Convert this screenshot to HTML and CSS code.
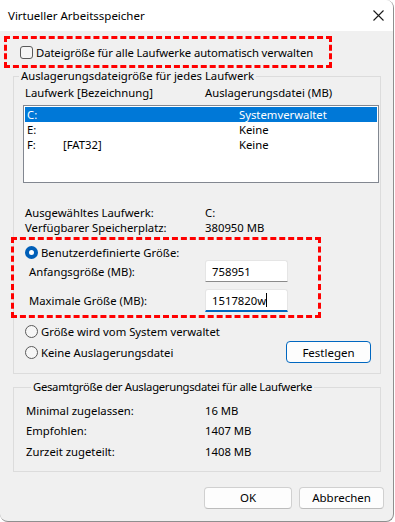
FILE: index.html
```html
<html lang="de">
<head>
    <meta charset="UTF-8">
    <meta name="viewport" content="width=device-width, initial-scale=1.0">
    <title>Virtueller Arbeitsspeicher</title>
    <link rel="stylesheet" href="styles.css">
</head>
<body>
    <div class="window">
        <div class="titlebar">
            <span class="title">Virtueller Arbeitsspeicher</span>
            <svg class="close" width="11" height="11" viewBox="0 0 11 11">
                <path d="M0.5 0.5 L10.5 10.5 M10.5 0.5 L0.5 10.5" stroke="#1a1a1a" stroke-width="1.1" fill="none"/>
            </svg>
        </div>

        <div class="content">
            <div class="mark mark-auto">
                <label class="check-row">
                    <span class="checkbox"></span>
                    Dateigröße für alle Laufwerke automatisch verwalten
                </label>
            </div>

            <fieldset class="group group-drive">
                <legend>Auslagerungsdateigröße für jedes Laufwerk</legend>
                <div class="cols">
                    <span class="col-a">Laufwerk [Bezeichnung]</span>
                    <span>Auslagerungsdatei (MB)</span>
                </div>
                <div class="listbox">
                    <div class="list-row selected"><span>C:</span><span></span><span>Systemverwaltet</span></div>
                    <div class="list-row"><span>E:</span><span></span><span>Keine</span></div>
                    <div class="list-row"><span>F:</span><span>[FAT32]</span><span>Keine</span></div>
                </div>

                <div class="info">
                    <div class="info-row"><span class="info-label">Ausgewähltes Laufwerk:</span><span>C:</span></div>
                    <div class="info-row"><span class="info-label">Verfügbarer Speicherplatz:</span><span>380950 MB</span></div>
                </div>

                <div class="mark mark-custom">
                    <div class="radio-row">
                        <span class="radio checked"></span>
                        Benutzerdefinierte Größe:
                    </div>
                    <div class="field-row">
                        <span class="field-label">Anfangsgröße (MB):</span>
                        <span class="input">758951</span>
                    </div>
                    <div class="field-row second">
                        <span class="field-label">Maximale Größe (MB):</span>
                        <span class="input focused">1517820w<span class="caret"></span></span>
                    </div>
                </div>

                <div class="radio-row option">
                    <span class="radio"></span>
                    Größe wird vom System verwaltet
                </div>
                <div class="radio-row option last">
                    <span class="radio"></span>
                    Keine Auslagerungsdatei
                    <button class="btn btn-default">Festlegen</button>
                </div>
            </fieldset>

            <fieldset class="group group-total">
                <legend>Gesamtgröße der Auslagerungsdatei für alle Laufwerke</legend>
                <div class="total-row"><span class="total-label">Minimal zugelassen:</span><span>16 MB</span></div>
                <div class="total-row"><span class="total-label">Empfohlen:</span><span>1407 MB</span></div>
                <div class="total-row"><span class="total-label">Zurzeit zugeteilt:</span><span>1408 MB</span></div>
            </fieldset>

            <div class="actions">
                <button class="btn btn-ok">OK</button>
                <button class="btn btn-cancel">Abbrechen</button>
            </div>
        </div>
    </div>
</body>
</html>
```

FILE: styles.css
```css
/* Fenster "Virtueller Arbeitsspeicher" */
body {
    margin: 0;
    padding: 0;
    background: #fff;
    font-family: "Noto Sans", "Open Sans", sans-serif;
    font-size: 11.3px;
    line-height: 15px;
    color: #000;
    white-space: nowrap;
}
.window {
    width: 394px;
    height: 522px;
    box-sizing: border-box;
    background: #f0f0f0;
    border-right: 1px solid #8f8f8f;
    border-bottom: 1px solid #8f8f8f;
    border-radius: 0 8px 8px 8px;
    overflow: hidden;
}
.titlebar {
    height: 31px;
    background: #fff;
    display: flex;
    align-items: center;
    padding-left: 8px;
}
.title {
    font-size: 11.5px;
}
.close {
    margin-left: auto;
    margin-right: 9px;
}
.content {
    padding-top: 5px;
}

/* rote Markierungen */
.mark {
    box-sizing: border-box;
    border: 3px dashed #f00;
}
.mark-auto {
    margin-left: 4px;
    width: 328px;
    height: 32px;
    display: flex;
    align-items: center;
    padding-left: 13px;
}
.check-row {
    display: flex;
    align-items: center;
    letter-spacing: -0.1px;
}
.checkbox {
    width: 13px;
    height: 13px;
    box-sizing: border-box;
    border: 1px solid #5a5a5a;
    border-radius: 3px;
    background: #f6f6f6;
    margin-right: 3px;
}

/* Gruppen */
.group {
    margin: 0 0 0 13px;
    width: 368px;
    box-sizing: border-box;
    border: 1px solid #dcdcdc;
    padding: 0;
    min-width: 0;
}
.group legend {
    margin-left: 5px;
    padding: 0 2px;
    line-height: 16px;
}
.group-drive {
    padding-bottom: 10px;
}
.cols {
    display: flex;
    padding-left: 11px;
    margin-top: 1px;
    line-height: 16px;
}
.col-a {
    width: 180px;
}
.listbox {
    margin: 4px 0 0 9px;
    width: 356px;
    height: 78px;
    box-sizing: border-box;
    border: 1px solid #828790;
    background: #fff;
    padding: 1px;
}
.list-row {
    display: grid;
    grid-template-columns: 36px 176px 1fr;
    height: 15px;
    line-height: 15px;
    padding-left: 2px;
}
.list-row.selected {
    background: #0078d7;
    color: #fff;
}
.info {
    margin-top: 22px;
    padding-left: 11px;
}
.info-row {
    display: flex;
    line-height: 15px;
}
.info-label {
    width: 180px;
}

.mark-custom {
    margin: 2px 0 0 -3px;
    width: 310px;
    height: 81px;
    padding: 4px 0 0 11px;
}
.radio-row {
    display: flex;
    align-items: center;
    height: 16px;
}
.radio {
    width: 13px;
    height: 13px;
    box-sizing: border-box;
    border: 1px solid #5a5a5a;
    border-radius: 50%;
    background: #f6f6f6;
    margin-right: 3px;
}
.radio.checked {
    border: 4px solid #005fb8;
    background: #fff;
}
.field-row {
    display: flex;
    align-items: center;
    padding-left: 4px;
}
.field-row.second {
    margin-top: 7px;
}
.field-label {
    width: 176px;
}
.input {
    width: 83px;
    height: 22px;
    box-sizing: border-box;
    background: #fff;
    border: 1px solid #e5e5e5;
    border-bottom-color: #8a8a8a;
    border-radius: 3px 3px 0 0;
    padding-left: 6px;
    display: flex;
    align-items: center;
}
.input.focused {
    height: 23px;
    border-bottom: 2px solid #0067c0;
}
.caret {
    width: 1px;
    height: 14px;
    background: #000;
}
.option {
    padding-left: 11px;
}
.radio-row.option {
    margin-top: 5px;
}
.radio-row.last {
    margin-top: 2px;
    height: 22px;
}

/* Schaltflächen */
.btn {
    font-family: inherit;
    font-size: 11.5px;
    color: #000;
    height: 22px;
    background: #fdfdfd;
    border: 1px solid #d0d0d0;
    border-bottom-color: #bcbcbc;
    border-radius: 4px;
    padding: 0;
}
.btn-default {
    margin-left: auto;
    margin-right: 9px;
    width: 85px;
    border-color: #0067c0;
}

.group-total {
    margin-top: 5px;
    padding: 5px 0 9px 12px;
}
.group-total legend {
    letter-spacing: -0.3px;
}
.total-row {
    display: flex;
    height: 20.5px;
    align-items: center;
}
.total-label {
    width: 179px;
}
.actions {
    display: flex;
    justify-content: flex-end;
    gap: 7px;
    padding-right: 9px;
    margin-top: 15px;
}
.btn-ok {
    width: 88px;
}
.btn-cancel {
    width: 85px;
}
```
